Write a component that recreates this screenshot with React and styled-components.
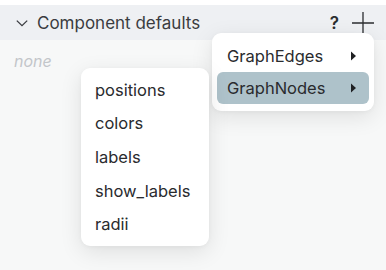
import React from 'react';
import styled, { createGlobalStyle } from 'styled-components';

const GlobalStyle = createGlobalStyle`
  html, body {
    margin: 0;
    padding: 0;
    background: #ffffff;
    font-family: Inter, "Noto Sans", sans-serif;
  }
`;

const Page = styled.div`
  position: relative;
  width: 386px;
  height: 270px;
  padding-top: 5px;
  box-sizing: border-box;
  overflow: hidden;
`;

const Panel = styled.div`
  display: flex;
  flex-direction: column;
  height: 265px;
  background: #f7f8f8;
`;

const Header = styled.div`
  display: flex;
  align-items: center;
  height: 35px;
  padding: 0 12px 0 16px;
  background: #eef0f3;
  color: #3a3c40;
`;

const Title = styled.span`
  flex: 1;
  margin-left: 9px;
  font-size: 17px;
`;

const HelpMark = styled.span`
  font-size: 17px;
  font-weight: 600;
  color: #2b2d30;
  margin-right: 13px;
`;

const Body = styled.div`
  padding: 11px 14px;
`;

const Empty = styled.span`
  font-style: italic;
  font-size: 16px;
  color: #c3c6ca;
`;

const Menu = styled.div`
  position: absolute;
  left: ${p => p.$left}px;
  top: ${p => p.$top}px;
  width: ${p => p.$width}px;
  padding: ${p => p.$pad}px 5px;
  box-sizing: border-box;
  background: #ffffff;
  border-radius: 9px;
  box-shadow: 0 6px 22px rgba(0, 0, 0, 0.1), 0 1px 4px rgba(0, 0, 0, 0.04);
`;

const Item = styled.div`
  display: flex;
  align-items: center;
  justify-content: space-between;
  height: ${p => p.$height}px;
  padding: 0 12px 0 ${p => p.$indent}px;
  border-radius: 6px;
  font-size: 16.5px;
  color: #2a2b2e;
  background: ${p => (p.$active ? '#aec2ca' : 'transparent')};
`;

const Chevron = () => (
  <svg width="12" height="12" viewBox="0 0 12 12">
    <path d="M0.8 3.6 L6 8.6 L11.2 3.6" fill="none" stroke="#3a3c40" strokeWidth="1.3" />
  </svg>
);

const Plus = () => (
  <svg width="22" height="22" viewBox="0 0 22 22">
    <path d="M11 0 V22 M0 11 H22" stroke="#2b2d30" strokeWidth="1.3" />
  </svg>
);

const Caret = () => (
  <svg width="7" height="10" viewBox="0 0 7 10">
    <path d="M1 0.5 L6 5 L1 9.5 Z" fill="#1f2023" />
  </svg>
);

const fields = ['positions', 'colors', 'labels', 'show_labels', 'radii'];

export default function App() {
  return (
    <Page>
      <GlobalStyle />
      <Panel>
        <Header>
          <Chevron />
          <Title>Component defaults</Title>
          <HelpMark>?</HelpMark>
          <Plus />
        </Header>
        <Body>
          <Empty>none</Empty>
        </Body>
      </Panel>

      <Menu $left={212} $top={33} $width={162} $pad={7}>
        <Item $height={32} $indent={10}>
          GraphEdges
          <Caret />
        </Item>
        <Item $height={32} $indent={10} $active>
          GraphNodes
          <Caret />
        </Item>
      </Menu>

      <Menu $left={81} $top={68} $width={128} $pad={5}>
        {fields.map(f => (
          <Item key={f} $height={33.6} $indent={9}>
            {f}
          </Item>
        ))}
      </Menu>
    </Page>
  );
}
